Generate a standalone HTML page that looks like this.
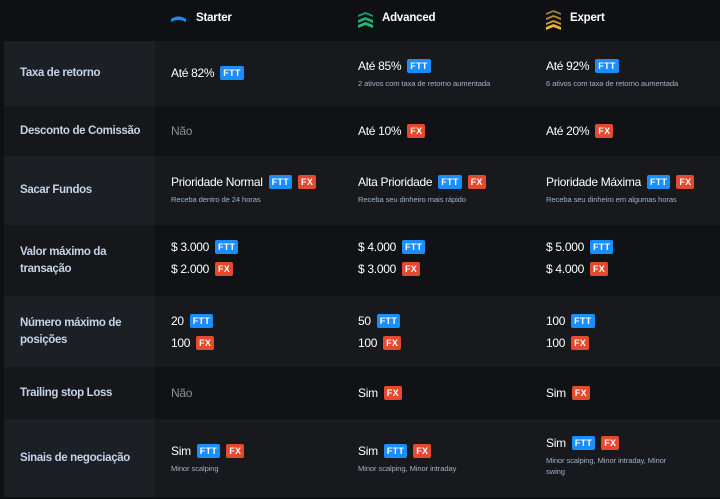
<!DOCTYPE html>
<html><head><meta charset="utf-8"><style>
*{margin:0;padding:0;box-sizing:border-box}
body{width:720px;height:499px;background:#0f1013;font-family:"Liberation Sans",Arial,sans-serif;position:relative;overflow:hidden}
.h{position:absolute;top:12px;color:#fff;font-weight:bold;font-size:11.5px;letter-spacing:-0.2px}
.row{position:absolute;left:4px;width:716px}
.lab{position:absolute;left:0;top:0;bottom:0;width:151px;color:#c5d3e8;font-weight:bold;font-size:11.5px;letter-spacing:-0.35px;display:flex;align-items:center;padding-left:16px;line-height:17px;white-space:nowrap}
.light{background:#17191d}.light .lab{background:#1c1f24}
.dark{background:#111215}.dark .lab{background:#15171b}
.c{position:absolute;color:#fff;font-size:12px;letter-spacing:-0.3px;white-space:nowrap}
.c .l{display:flex;align-items:center;height:16px}
.s{font-size:7.6px;color:#9fb0c8;margin-top:4px;line-height:11px;letter-spacing:-0.1px}
.b{display:inline-block;height:14px;line-height:14px;font-size:9px;font-weight:bold;color:#fff;border-radius:2px;padding:0 3px;margin-left:6px;letter-spacing:.3px}
.f{background:#1a8dff}.x{background:#e54a2e}
.g{color:#8a9099}
</style></head><body>
<svg style="position:absolute;left:171px;top:15px" width="15" height="8"><path d="M0 4 Q7.5 -1 15 4 L15 7 Q7.5 3 0 7Z" fill="#1a8dff"/></svg>
<div class="h" style="left:196px">Starter</div>
<svg style="position:absolute;left:358px;top:12px" width="15" height="16"><path d="M0 3 L7.5 0 L15 3 L15 5 L7.5 2 L0 5Z" fill="#1e9a6a"/><path d="M0 8 L7.5 5 L15 8 L15 11 L7.5 8 L0 11Z" fill="#22aa74"/><path d="M0 13 L7.5 10 L15 13 L15 16 L7.5 13 L0 16Z" fill="#26b87e"/></svg>
<div class="h" style="left:382px">Advanced</div>
<svg style="position:absolute;left:546px;top:10px" width="15" height="20"><path d="M0 3 L7.5 0 L15 3 L15 5 L7.5 2 L0 5Z" fill="#9a7a3a"/><path d="M0 8 L7.5 5 L15 8 L15 10 L7.5 7 L0 10Z" fill="#b38a3c"/><path d="M0 13 L7.5 10 L15 13 L15 15 L7.5 12 L0 15Z" fill="#d39e3a"/><path d="M0 17 L7.5 14 L15 17 L15 20 L7.5 17 L0 20Z" fill="#f2b33a"/></svg>
<div class="h" style="left:570px">Expert</div>

<div class="row light" style="top:41px;height:65px"><div class="lab">Taxa de retorno</div>
<div class="c" style="left:167px;top:24px"><div class="l">Até 82%<span class="b f">FTT</span></div></div>
<div class="c" style="left:354px;top:17px"><div class="l">Até 85%<span class="b f">FTT</span></div><div class="s">2 ativos com taxa de retorno aumentada</div></div>
<div class="c" style="left:542px;top:17px"><div class="l">Até 92%<span class="b f">FTT</span></div><div class="s">6 ativos com taxa de retorno aumentada</div></div></div>

<div class="row dark" style="top:106px;height:50px"><div class="lab">Desconto de Comissão</div>
<div class="c" style="left:167px;top:17px"><div class="l g">Não</div></div>
<div class="c" style="left:354px;top:17px"><div class="l">Até 10%<span class="b x">FX</span></div></div>
<div class="c" style="left:542px;top:17px"><div class="l">Até 20%<span class="b x">FX</span></div></div></div>

<div class="row light" style="top:156px;height:69px"><div class="lab">Sacar Fundos</div>
<div class="c" style="left:167px;top:18px"><div class="l">Prioridade Normal<span class="b f">FTT</span><span class="b x">FX</span></div><div class="s">Receba dentro de 24 horas</div></div>
<div class="c" style="left:354px;top:18px"><div class="l">Alta Prioridade<span class="b f">FTT</span><span class="b x">FX</span></div><div class="s">Receba seu dinheiro mais rápido</div></div>
<div class="c" style="left:542px;top:18px"><div class="l">Prioridade Máxima<span class="b f">FTT</span><span class="b x">FX</span></div><div class="s">Receba seu dinheiro em algumas horas</div></div></div>

<div class="row dark" style="top:225px;height:71px"><div class="lab">Valor máximo da<br>transação</div>
<div class="c" style="left:167px;top:14px"><div class="l">$ 3.000<span class="b f">FTT</span></div><div class="l" style="margin-top:6px">$ 2.000<span class="b x">FX</span></div></div>
<div class="c" style="left:354px;top:14px"><div class="l">$ 4.000<span class="b f">FTT</span></div><div class="l" style="margin-top:6px">$ 3.000<span class="b x">FX</span></div></div>
<div class="c" style="left:542px;top:14px"><div class="l">$ 5.000<span class="b f">FTT</span></div><div class="l" style="margin-top:6px">$ 4.000<span class="b x">FX</span></div></div></div>

<div class="row light" style="top:296px;height:71px"><div class="lab">Número máximo de<br>posições</div>
<div class="c" style="left:167px;top:17px"><div class="l">20<span class="b f">FTT</span></div><div class="l" style="margin-top:6px">100<span class="b x">FX</span></div></div>
<div class="c" style="left:354px;top:17px"><div class="l">50<span class="b f">FTT</span></div><div class="l" style="margin-top:6px">100<span class="b x">FX</span></div></div>
<div class="c" style="left:542px;top:17px"><div class="l">100<span class="b f">FTT</span></div><div class="l" style="margin-top:6px">100<span class="b x">FX</span></div></div></div>

<div class="row dark" style="top:367px;height:52px"><div class="lab">Trailing stop Loss</div>
<div class="c" style="left:167px;top:18px"><div class="l g">Não</div></div>
<div class="c" style="left:354px;top:18px"><div class="l">Sim<span class="b x">FX</span></div></div>
<div class="c" style="left:542px;top:18px"><div class="l">Sim<span class="b x">FX</span></div></div></div>

<div class="row light" style="top:419px;height:78px"><div class="lab">Sinais de negociação</div>
<div class="c" style="left:167px;top:24px"><div class="l">Sim<span class="b f">FTT</span><span class="b x">FX</span></div><div class="s">Minor scalping</div></div>
<div class="c" style="left:354px;top:24px"><div class="l">Sim<span class="b f">FTT</span><span class="b x">FX</span></div><div class="s">Minor scalping, Minor intraday</div></div>
<div class="c" style="left:542px;top:16px"><div class="l">Sim<span class="b f">FTT</span><span class="b x">FX</span></div><div class="s">Minor scalping, Minor intraday, Minor<br>swing</div></div></div>
</body></html>
